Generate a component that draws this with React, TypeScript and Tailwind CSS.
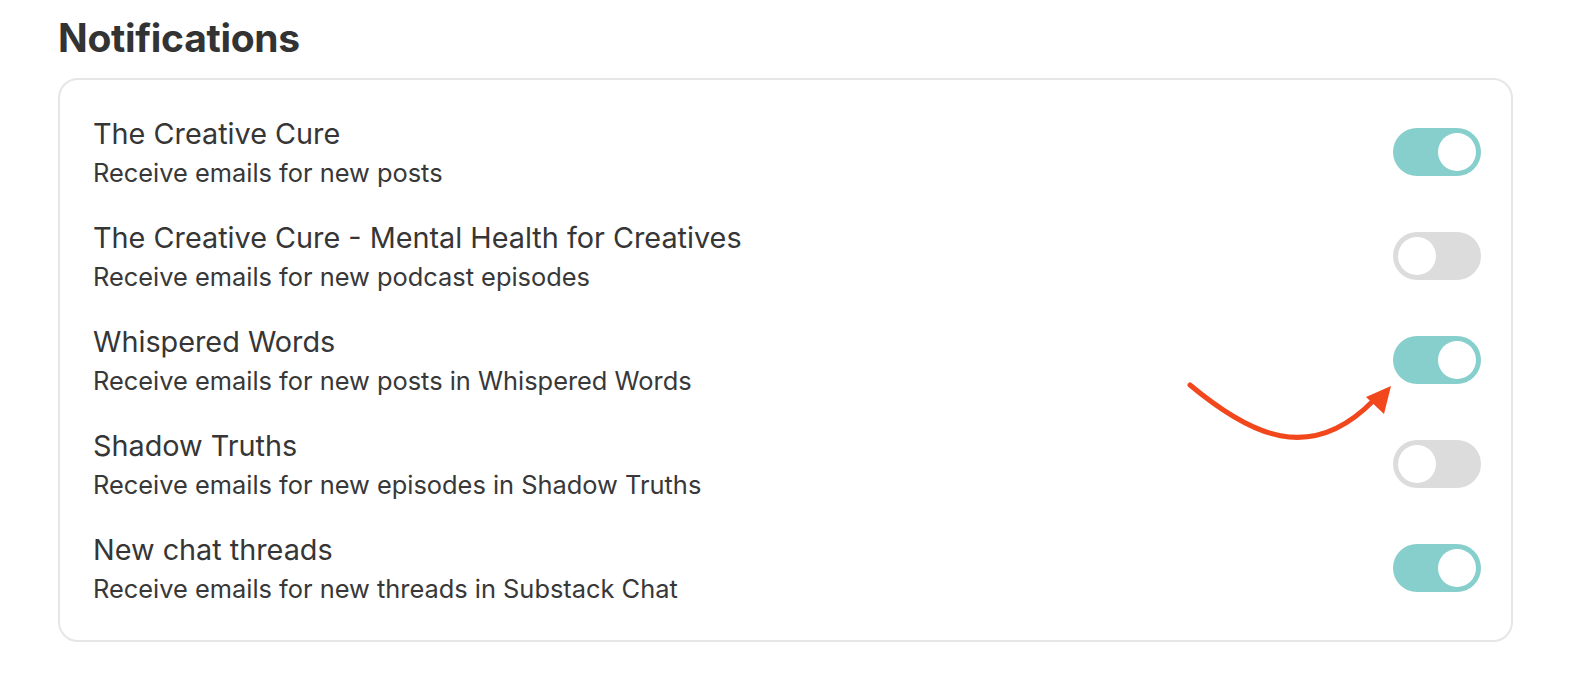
const rows = [
  { title: "The Creative Cure", sub: "Receive emails for new posts", on: true },
  { title: "The Creative Cure - Mental Health for Creatives", sub: "Receive emails for new podcast episodes", on: false },
  { title: "Whispered Words", sub: "Receive emails for new posts in Whispered Words", on: true },
  { title: "Shadow Truths", sub: "Receive emails for new episodes in Shadow Truths", on: false },
  { title: "New chat threads", sub: "Receive emails for new threads in Substack Chat", on: true },
];

function Toggle({ on }: { on: boolean }) {
  return (
    <div
      className={`flex h-[48px] w-[88px] shrink-0 items-center rounded-full px-[5px] ${
        on ? "justify-end bg-[#86cfcd]" : "justify-start bg-[#dcdcdc]"
      }`}
    >
      <div className="h-[38px] w-[38px] rounded-full bg-white" />
    </div>
  );
}

export default function App() {
  return (
    <div className="relative min-h-[676px] w-full bg-white pl-[58px] pr-[61px] pt-[14px] font-['Inter',sans-serif] text-[#363636]">
      <h1 className="text-[39px] font-bold leading-[48px] tracking-[-0.3px] text-[#333]">Notifications</h1>
      <div className="mt-[16px] rounded-[20px] border-2 border-[#e6e6e6] py-[20px] pl-[33px] pr-[30px]">
        {rows.map((r) => (
          <div key={r.title} className="flex h-[104px] items-center justify-between">
            <div className="flex flex-col">
              <div className="text-[28.8px] leading-[36px] text-[#363636]">{r.title}</div>
              <div className="mt-[5px] text-[25.4px] leading-[32px] text-[#383838]">{r.sub}</div>
            </div>
            <Toggle on={r.on} />
          </div>
        ))}
      </div>
      <svg className="pointer-events-none absolute left-0 top-0" width="1574" height="676" viewBox="0 0 1574 676">
        <path d="M1190 385 C 1250 435, 1310 465, 1373 401" fill="none" stroke="#f2471d" strokeWidth="5" strokeLinecap="round" />
        <polygon points="1391,386 1366,397 1384,414" fill="#f2471d" />
      </svg>
    </div>
  );
}
